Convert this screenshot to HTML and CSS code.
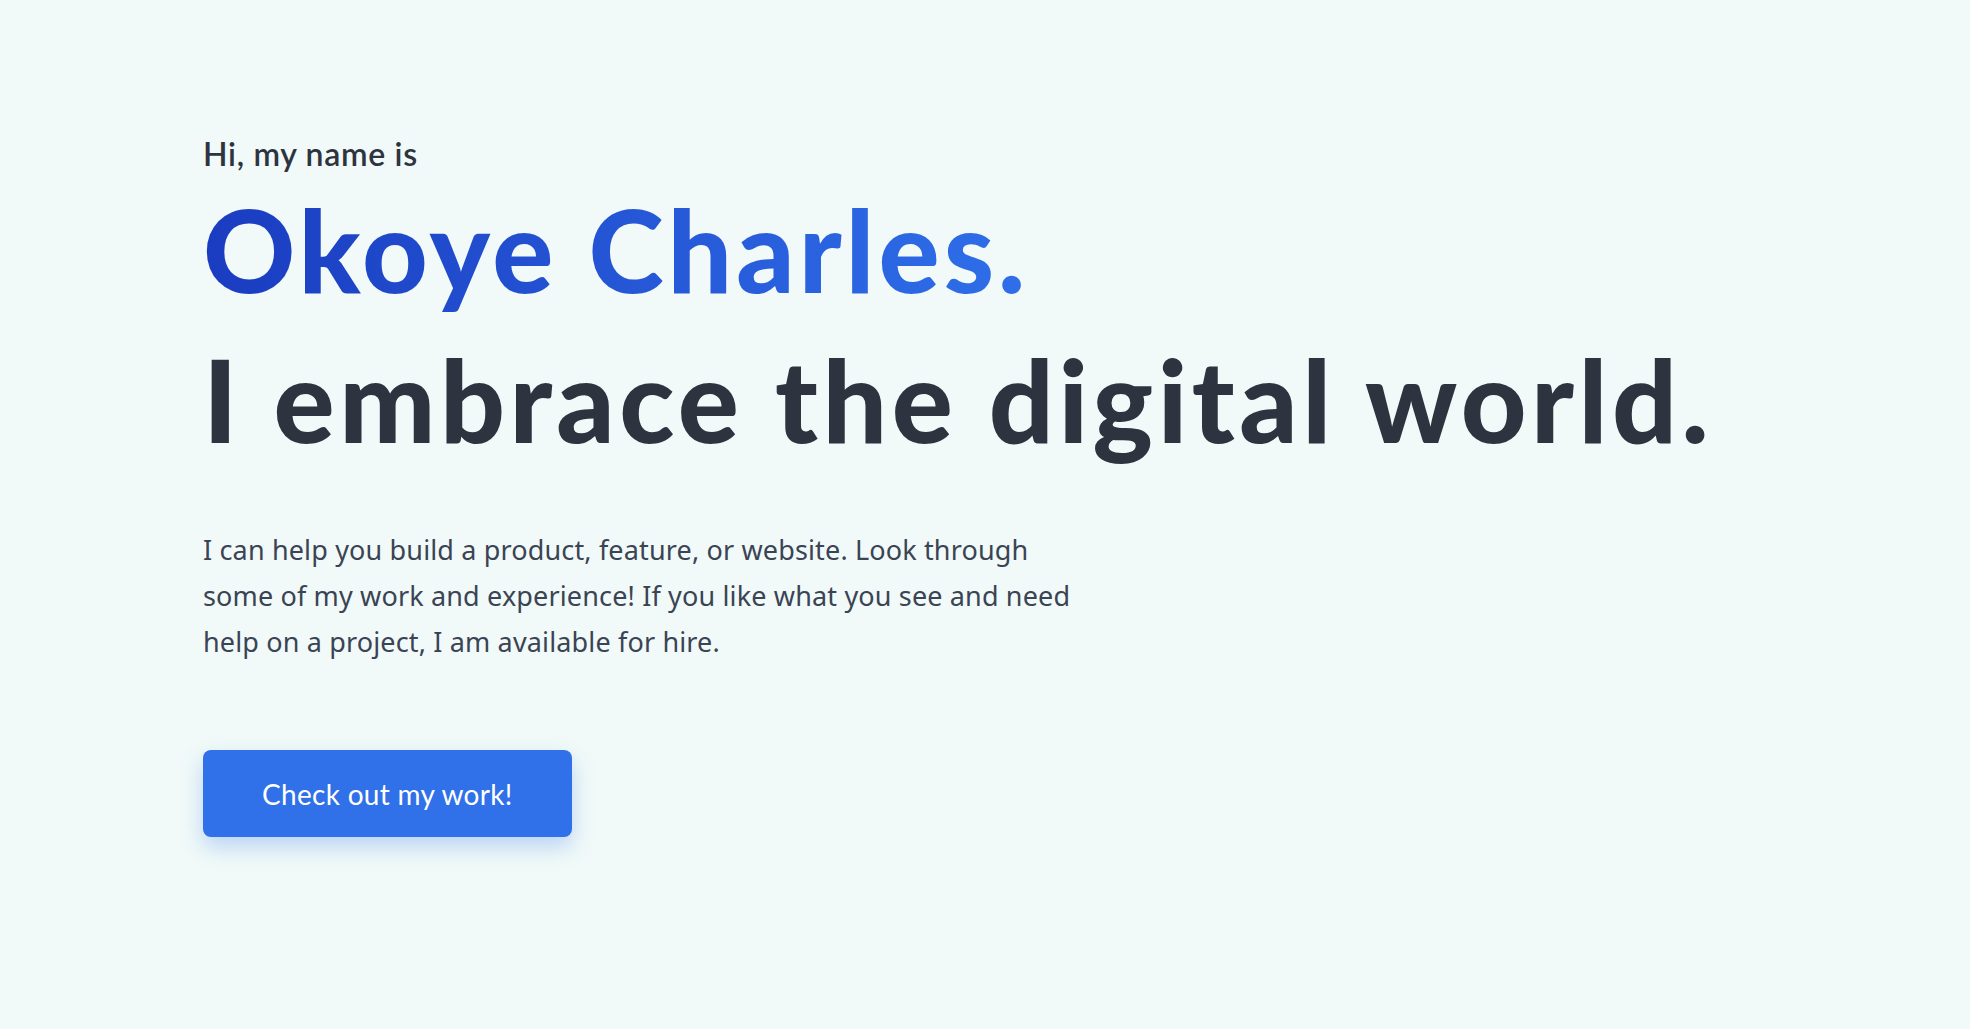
FILE: index.html
```html
<!DOCTYPE html>
<html lang="en">
<head>
<meta charset="utf-8">
<title>Okoye Charles</title>
<link rel="stylesheet" href="styles.css">
</head>
<body>
<main class="hero">
  <p class="hero__greeting">Hi, my name is</p>
  <h1 class="hero__title">
    <span class="hero__name">Okoye Charles.</span>
    <span class="hero__tagline">I embrace the digital world.</span>
  </h1>
  <p class="hero__text">I can help you build a product, feature, or website. Look through some of my work and experience! If you like what you see and need help on a project, I am available for hire.</p>
  <a class="hero__button" href="#work">Check out my work!</a>
</main>
</body>
</html>
```
FILE: styles.css
```css
* { box-sizing: border-box; }
html, body { margin: 0; padding: 0; }
body {
  background: #f1faf8;
  color: #2d3440;
  font-family: "Lato", "Noto Sans", sans-serif;
  min-height: 1029px;
}
.hero {
  padding: 135px 0 0 203px;
  display: flex;
  flex-direction: column;
  align-items: flex-start;
}
.hero__greeting {
  margin: 0;
  font-size: 32px;
  line-height: 38px;
  font-weight: 600;
  letter-spacing: 0.7px;
  color: #2d3440;
}
.hero__title {
  margin: 1px 0 0;
  font-size: 114px;
  line-height: 150px;
  font-weight: 900;
  display: flex;
  flex-direction: column;
  align-items: flex-start;
}
.hero__name {
  letter-spacing: 4px;
  background: linear-gradient(90deg, #1a3cc1 0%, #2f6fe9 100%);
  -webkit-background-clip: text;
  background-clip: text;
  color: transparent;
}
.hero__tagline {
  letter-spacing: 4.5px;
  color: #2d3440;
}
.hero__text {
  margin: 53px 0 0;
  max-width: 878px;
  font-family: "Noto Sans", sans-serif;
  font-size: 27px;
  line-height: 46px;
  letter-spacing: 0.15px;
  color: #3a4454;
}
.hero__button {
  margin-top: 85px;
  height: 87px;
  padding: 0 59px;
  display: inline-flex;
  align-items: center;
  background: #3070e8;
  color: #fff;
  border-radius: 8px;
  text-decoration: none;
  font-size: 28px;
  letter-spacing: 0.3px;
  box-shadow: 0 10px 22px rgba(48, 112, 232, 0.28);
}
```
